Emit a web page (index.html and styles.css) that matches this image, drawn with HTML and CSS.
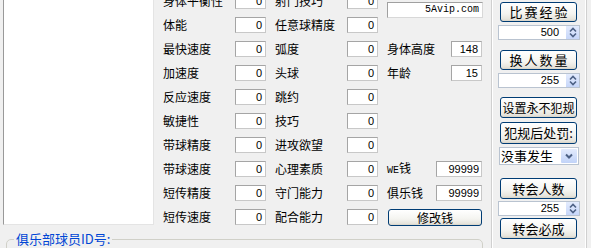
FILE: index.html
```html
<!DOCTYPE html>
<html lang="zh-CN">
<head>
<meta charset="utf-8">
<title>编辑器</title>
<link rel="stylesheet" href="styles.css">
</head>
<body>
<div class="window">
  <div class="listbox"></div>

  <div class="form">
    <span class="l1">身体平衡性</span><span class="n1 num">0</span>
    <span class="l2">射门技巧</span><span class="n2 num">0</span>
    <div class="c3 site-cell"><span class="site">5Avip.com</span></div>

    <span class="l1">体能</span><span class="n1 num">0</span>
    <span class="l2">任意球精度</span><span class="n2 num">0</span>

    <span class="l1">最快速度</span><span class="n1 num">0</span>
    <span class="l2">弧度</span><span class="n2 num">0</span>
    <div class="c3"><span>身体高度</span><span class="num short">148</span></div>

    <span class="l1">加速度</span><span class="n1 num">0</span>
    <span class="l2">头球</span><span class="n2 num">0</span>
    <div class="c3"><span>年龄</span><span class="num short">15</span></div>

    <span class="l1">反应速度</span><span class="n1 num">0</span>
    <span class="l2">跳约</span><span class="n2 num">0</span>

    <span class="l1">敏捷性</span><span class="n1 num">0</span>
    <span class="l2">技巧</span><span class="n2 num">0</span>

    <span class="l1">带球精度</span><span class="n1 num">0</span>
    <span class="l2">进攻欲望</span><span class="n2 num">0</span>

    <span class="l1">带球速度</span><span class="n1 num">0</span>
    <span class="l2">心理素质</span><span class="n2 num">0</span>
    <div class="c3"><span><span class="mono">WE</span>钱</span><span class="num money">99999</span></div>

    <span class="l1">短传精度</span><span class="n1 num">0</span>
    <span class="l2">守门能力</span><span class="n2 num">0</span>
    <div class="c3"><span>俱乐钱</span><span class="num money">99999</span></div>

    <span class="l1">短传速度</span><span class="n1 num">0</span>
    <span class="l2">配合能力</span><span class="n2 num">0</span>
    <div class="c3"><span class="btn btn-money">修改钱</span></div>
  </div>

  <div class="panel">
    <div class="btn pbtn wide b1">比赛经验</div>
    <div class="spin s1"><span class="spin-val">500</span><span class="spin-btns"><svg width="12" height="13" viewBox="0 0 12 13"><path d="M3 5.5 L6 2.5 L9 5.5" fill="none" stroke="#4d6185" stroke-width="1.6"/><path d="M3 7.5 L6 10.5 L9 7.5" fill="none" stroke="#4d6185" stroke-width="1.6"/></svg></span></div>
    <div class="btn pbtn wide b2">换人数量</div>
    <div class="spin s2"><span class="spin-val">255</span><span class="spin-btns"><svg width="12" height="13" viewBox="0 0 12 13"><path d="M3 5.5 L6 2.5 L9 5.5" fill="none" stroke="#4d6185" stroke-width="1.6"/><path d="M3 7.5 L6 10.5 L9 7.5" fill="none" stroke="#4d6185" stroke-width="1.6"/></svg></span></div>
    <div class="btn pbtn b3">设置永不犯规</div>
    <div class="btn pbtn b4">犯规后处罚:</div>
    <div class="select"><span class="select-val">没事发生</span><span class="select-btn"><svg width="12" height="10" viewBox="0 0 12 10"><path d="M3 3.5 L6 6.5 L9 3.5" fill="none" stroke="#4d6185" stroke-width="2"/></svg></span></div>
    <div class="btn pbtn b5">转会人数</div>
    <div class="spin s3"><span class="spin-val">255</span><span class="spin-btns"><svg width="12" height="13" viewBox="0 0 12 13"><path d="M3 5.5 L6 2.5 L9 5.5" fill="none" stroke="#4d6185" stroke-width="1.6"/><path d="M3 7.5 L6 10.5 L9 7.5" fill="none" stroke="#4d6185" stroke-width="1.6"/></svg></span></div>
    <div class="btn pbtn b6">转会必成</div>
  </div>

  <fieldset class="group">
    <legend>俱乐部球员ID号:</legend>
  </fieldset>
</div>
</body>
</html>
```

FILE: styles.css
```css
html, body {
  margin: 0;
  padding: 0;
}

body {
  width: 591px;
  height: 248px;
  overflow: hidden;
  background: #f0f0f0;
  color: #000;
  font-family: "Noto Sans CJK SC", "Noto Sans", sans-serif;
  font-size: 12px;
  line-height: 14px;
}

.window {
  display: grid;
  grid-template-columns: 151px 9px 320px 8px 96px;
  grid-template-rows: 240px auto;
  padding-left: 3px;
  margin-top: -11px;
}

.listbox {
  grid-column: 1;
  grid-row: 1;
  height: 236px;
  box-sizing: border-box;
  background: #fff;
  border-left: 1px solid #999;
  border-top: 1px solid #999;
  border-right: 1px solid #e4e4e4;
  border-bottom: 1px solid #e4e4e4;
}

.form {
  grid-column: 3;
  grid-row: 1;
  display: grid;
  grid-template-columns: 72px 40px 72px 40px 96px;
  grid-auto-rows: 24px;
  align-items: center;
}

.l1 { grid-column: 1; white-space: nowrap; }
.n1 { grid-column: 2; }
.l2 { grid-column: 3; white-space: nowrap; }
.n2 { grid-column: 4; }
.c3 {
  grid-column: 5;
  display: flex;
  justify-content: space-between;
  align-items: center;
  padding-right: 1px;
}

.site-cell {
  grid-row: span 2;
  align-self: start;
  margin-top: 13px;
  padding-right: 0;
}

.site {
  box-sizing: border-box;
  width: 96px;
  height: 16px;
  background: #fff;
  border: 1px solid #a0a0a0;
  border-right-color: #d8d8d8;
  border-bottom-color: #d8d8d8;
  text-align: right;
  padding-right: 3px;
  font-family: "Liberation Mono", monospace;
  font-size: 10px;
  line-height: 14px;
}

.mono {
  font-family: "Liberation Mono", monospace;
  font-size: 10px;
}

.num {
  box-sizing: border-box;
  display: block;
  width: 31px;
  height: 16px;
  background: #fff;
  border: 1px solid #a5a5a5;
  border-right-color: #c8c8c8;
  border-bottom-color: #c8c8c8;
  text-align: right;
  padding-right: 3px;
  font-family: "Liberation Sans", Arial, sans-serif;
  font-size: 11px;
  line-height: 14px;
}

.num.money {
  width: 46px;
  padding-right: 2px;
}

.btn {
  box-sizing: border-box;
  display: flex;
  align-items: center;
  justify-content: center;
  border: 1px solid #003c74;
  border-radius: 3px;
  background: linear-gradient(#ffffff, #f4f4f0 60%, #e6e4dc 90%, #d6d2c6);
  white-space: nowrap;
}

.btn-money {
  width: 94px;
  height: 17px;
  margin-left: 1px;
  align-items: flex-end;
  font-size: 12px;
  line-height: 14px;
}

.panel {
  grid-column: 5;
  grid-row: 1 / span 2;
  height: 280px;
  box-sizing: border-box;
  border-left: 1px solid #d0d0d0;
  border-right: 1px solid #d0d0d0;
  box-shadow: inset 1px 0 #fff, inset -1px 0 #fff;
  padding-top: 13px;
  display: flex;
  flex-direction: column;
  align-items: flex-start;
}

.pbtn {
  width: 77px;
  height: 20px;
  margin-left: 8px;
  font-size: 13px;
}

.pbtn.wide {
  font-size: 13px;
  letter-spacing: 2px;
  text-indent: 2px;
}

.b1 { margin-top: 0; }
.b2 { margin-top: 10px; }
.b3 { margin-top: 9px; height: 21px; font-size: 12px; }
.b4 { margin-top: 4px; height: 22px; }
.b5 { margin-top: 13px; height: 21px; }
.b6 { margin-top: 2px; height: 21px; }

.spin {
  box-sizing: border-box;
  width: 82px;
  height: 15px;
  margin-left: 6px;
  display: flex;
  align-items: stretch;
  background: #fff;
  border: 1px solid #b9c3d0;
}

.s1 { margin-top: 3px; }
.s2 { margin-top: 3px; }
.s3 { margin-top: 2px; }

.spin-val {
  flex: 1;
  text-align: right;
  padding-right: 6px;
  font-family: "Liberation Sans", Arial, sans-serif;
  font-size: 11px;
  line-height: 13px;
}

.spin-btns {
  width: 13px;
  display: flex;
  align-items: center;
  justify-content: center;
  background: linear-gradient(#e3ebfd, #c6d6f9);
  border-left: 1px solid #fff;
}

.select {
  box-sizing: border-box;
  width: 80px;
  height: 18px;
  margin-top: 3px;
  margin-left: 7px;
  display: flex;
  background: #fff;
  border: 1px solid #b9c3d0;
}

.select-val {
  flex: 1;
  font-size: 13px;
  line-height: 16px;
  padding-left: 1px;
}

.select-btn {
  width: 16px;
  display: flex;
  align-items: center;
  justify-content: center;
  background: linear-gradient(#e3ebfd, #c1d3f8);
  border: 1px solid #fff;
  border-radius: 2px;
}

.group {
  grid-column: 1 / 4;
  grid-row: 2;
  margin: 3px 0 0 3px;
  padding: 0;
  height: 30px;
  border: 1px solid #d0d0c8;
  border-radius: 5px;
}

.group legend {
  margin-left: 7px;
  padding: 0 2px;
  color: #0046d5;
  font-size: 13px;
  line-height: 14px;
}
```
